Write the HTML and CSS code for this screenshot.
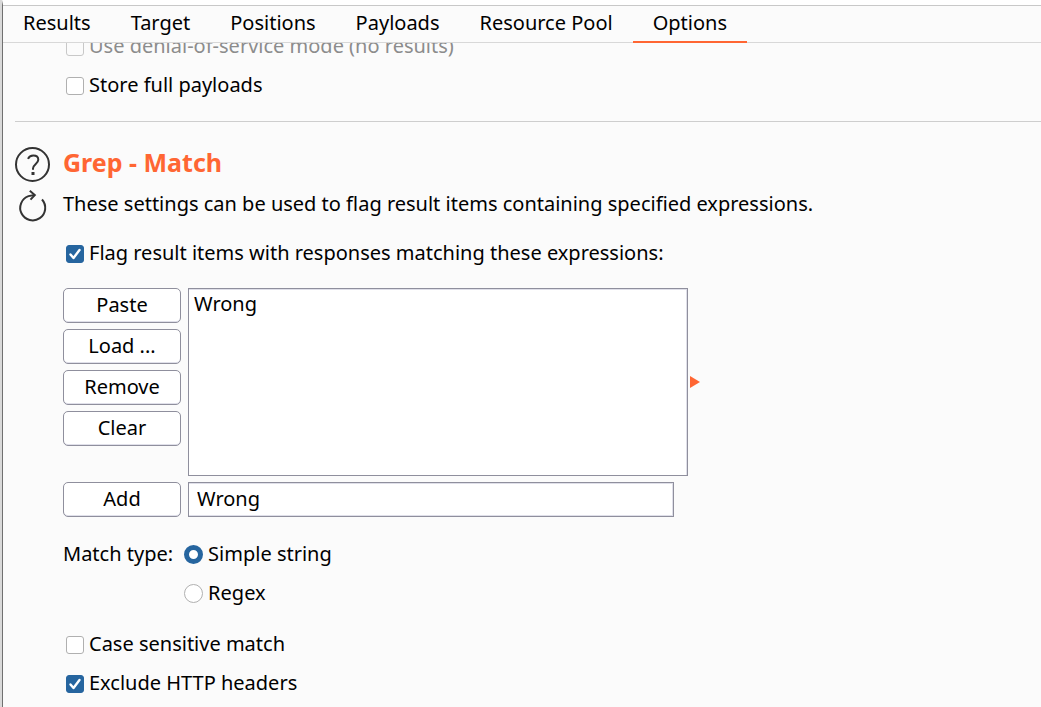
FILE: index.html
```html
<!DOCTYPE html>
<html lang="en">
<head>
<meta charset="utf-8">
<title>Intruder attack - Options</title>
<link rel="stylesheet" href="styles.css">
</head>
<body>
<div class="window">
  <nav class="tabs">
    <a class="tab" href="#results">Results</a>
    <a class="tab" href="#target">Target</a>
    <a class="tab" href="#positions">Positions</a>
    <a class="tab" href="#payloads">Payloads</a>
    <a class="tab" href="#pool">Resource Pool</a>
    <a class="tab tab-active" href="#options" aria-current="page">Options</a>
  </nav>
  <main class="panel">
    <section class="results-settings">
      <label class="option option-disabled"><input class="check" type="checkbox" disabled>Use denial-of-service mode (no results)</label>
      <label class="option"><input class="check" type="checkbox">Store full payloads</label>
    </section>
    <section class="grep">
      <div class="side">
        <button class="icon-button" type="button" aria-label="Help">
          <svg width="36" height="36" viewBox="0 0 36 36" fill="none" stroke="#333" stroke-width="2"><circle cx="17.5" cy="17.5" r="16.5"/><path d="M13 11.8c1-2.3 3-3.3 5.3-3.3 3 0 5 1.7 5 4.3 0 3.7-5.3 4.6-5.3 8.7v1.2"/><path d="M16.5 26.5h3" stroke-width="3"/></svg>
        </button>
        <button class="icon-button" type="button" aria-label="Restore defaults">
          <svg width="36" height="36" viewBox="0 0 36 36" fill="none" stroke="#333" stroke-width="2"><path d="M27 10.5a12.5 12.5 0 1 1-13.5-3.4l6-1"/><path d="M14.8 1.8l5 4.3-4.3 4.5"/></svg>
        </button>
      </div>
      <div class="body">
        <h2 class="title">Grep - Match</h2>
        <p class="description">These settings can be used to flag result items containing specified expressions.</p>
        <label class="option option-flag"><input class="check" type="checkbox" checked>Flag result items with responses matching these expressions:</label>
        <div class="editor">
          <div class="buttons">
            <button class="button" type="button">Paste</button>
            <button class="button" type="button">Load ...</button>
            <button class="button" type="button">Remove</button>
            <button class="button" type="button">Clear</button>
          </div>
          <div class="list-wrap">
            <ul class="list" aria-label="Expressions"><li>Wrong</li></ul>
            <svg class="marker" width="10" height="12" viewBox="0 0 10 12"><path d="M0 0l10 6-10 6z" fill="#ff6633"/></svg>
          </div>
          <button class="button" type="button">Add</button>
          <input class="field" type="text" value="Wrong" aria-label="New expression">
        </div>
        <div class="match" role="radiogroup" aria-labelledby="match-type">
          <span id="match-type">Match type:</span>
          <div class="choices">
            <label class="choice"><input class="radio" type="radio" name="match" checked>Simple string</label>
            <label class="choice"><input class="radio" type="radio" name="match">Regex</label>
          </div>
        </div>
        <label class="option"><input class="check" type="checkbox">Case sensitive match</label>
        <label class="option"><input class="check" type="checkbox" checked>Exclude HTTP headers</label>
      </div>
    </section>
  </main>
</div>
</body>
</html>
```
FILE: styles.css
```css
* { box-sizing: border-box; }
body {
  margin: 0;
  background: #d9d9d9;
  color: #000;
  font: 20px/39px "Noto Sans", "Open Sans", sans-serif;
}
button, input { font: inherit; color: inherit; }
.window {
  display: flex;
  flex-direction: column;
  height: 100vh;
  margin-left: 2px;
  border-left: 1px solid #707070;
  border-top: 5px solid #fff;
  background: #fbfbfb;
}
.tabs {
  display: flex;
  flex: none;
  border-top: 1px solid #c8c8c8;
  border-bottom: 1px solid #d8d8d8;
}
.tab {
  height: 36px;
  padding: 0 20px;
  line-height: 34px;
  color: #000;
  text-decoration: none;
  white-space: nowrap;
}
.tab-active { box-shadow: inset 0 -1px #ff6633, 0 1px #ff6633; }
.panel { flex: 1; min-height: 0; overflow: hidden; }
.results-settings {
  margin: -17px 0 0 12px;
  padding: 0 0 17px 48px;
  border-bottom: 1px solid #cecece;
}
.option, .choice { display: flex; align-items: center; gap: 5px; width: fit-content; white-space: nowrap; }
.option { padding-left: 3px; }
.option-disabled { color: #8c8c8c; }
.check, .radio {
  appearance: none;
  flex: none;
  margin: 2px 0 0;
  border: 1px solid #b0b0b0;
  background: #fff center no-repeat;
}
.check { width: 18px; height: 18px; border-radius: 3px; }
.check:disabled { background-color: #fbfbfb; border-color: #c8c8c8; }
.check:checked {
  border-color: #26659f;
  background-color: #26659f;
  background-image: url("data:image/svg+xml,%3Csvg xmlns='http://www.w3.org/2000/svg' width='16' height='16' fill='none' stroke='white' stroke-width='2.4' stroke-linecap='round' stroke-linejoin='round'%3E%3Cpath d='M3.5 8.5l3 3.5 6-8'/%3E%3C/svg%3E");
}
.radio { width: 19px; height: 19px; border-radius: 50%; }
.radio:checked { border: 5px solid #26659f; }
.grep { display: flex; gap: 12px; padding: 21px 12px 0; }
.side { display: flex; flex-direction: column; gap: 6px; padding-top: 4px; width: 36px; }
.icon-button { height: 36px; padding: 0; border: 0; background: none; }
.icon-button svg { display: block; }
.body { flex: 1; min-width: 0; }
.results-settings .option { padding-left: 3px; }
.title { margin: 0; color: #ff6633; font-size: 25px; }
.description { margin: 2px 0 0; }
.option-flag { margin: 10px 0 16px; }
.editor { display: grid; grid-template-columns: 118px minmax(0, 500px); gap: 6px 7px; }
.buttons { display: flex; flex-direction: column; gap: 6px; }
.button {
  height: 35px;
  padding: 0 0 2px;
  border: 1px solid #8f8f9d;
  border-radius: 5px;
  background: #fff;
  line-height: 31px;
  box-shadow: inset 0 -1px #e0e0ea;
}
.list-wrap { position: relative; }
.list {
  height: 188px;
  margin: 0;
  padding: 0 5px;
  border: 1px solid #8f8f9d;
  background: #fff;
  box-shadow: inset -1px 1px #dfdfe9;
  line-height: 30px;
  list-style: none;
}
.marker { position: absolute; left: calc(100% + 2px); top: 88px; }
.field {
  width: calc(100% - 14px);
  height: 35px;
  padding: 0 8px 2px;
  border: 1px solid #8f8f9d;
  background: #fff;
  box-shadow: inset -1px 1px #dfdfe9, inset 0 -1px #dfdfe9;
}
.match { display: flex; gap: 11px; margin: 17px 0 12px; }
```
